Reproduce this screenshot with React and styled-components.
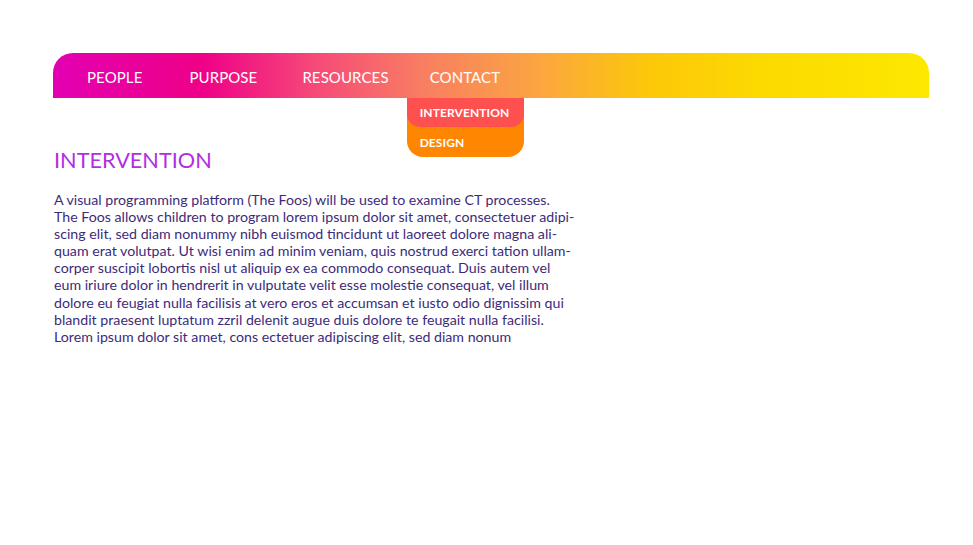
import React from 'react';
import styled, { createGlobalStyle } from 'styled-components';

const GlobalStyle = createGlobalStyle`
  html, body {
    margin: 0;
    padding: 0;
    background: #ffffff;
  }
  body {
    font-family: "Lato", "Open Sans", sans-serif;
  }
`;

const navItems = ['PEOPLE', 'PURPOSE', 'RESOURCES', 'CONTACT'];

const bodyLines = [
  'A visual programming platform (The Foos) will be used to examine CT processes.',
  'The Foos allows children to program lorem ipsum dolor sit amet, consectetuer adipi-',
  'scing elit, sed diam nonummy nibh euismod tincidunt ut laoreet dolore magna ali-',
  'quam erat volutpat. Ut wisi enim ad minim veniam, quis nostrud exerci tation ullam-',
  'corper suscipit lobortis nisl ut aliquip ex ea commodo consequat. Duis autem vel',
  'eum iriure dolor in hendrerit in vulputate velit esse molestie consequat, vel illum',
  'dolore eu feugiat nulla facilisis at vero eros et accumsan et iusto odio dignissim qui',
  'blandit praesent luptatum zzril delenit augue duis dolore te feugait nulla facilisi.',
  'Lorem ipsum dolor sit amet, cons ectetuer adipiscing elit, sed diam nonum',
];

const Page = styled.div`
  padding: 53px 44px 0 53px;
`;

const NavBar = styled.nav`
  display: flex;
  align-items: flex-start;
  height: 45px;
  padding-left: 34px;
  border-radius: 20px 20px 0 0;
  background: linear-gradient(
    90deg,
    #e300b2 0%,
    #ef0088 17%,
    #f64a78 30%,
    #f87d62 42%,
    #fba442 55%,
    #fcc80a 68%,
    #fcdb00 82%,
    #fde800 100%
  );
`;

const NavItem = styled.div`
  position: relative;
  margin-right: ${(p) => p.gap}px;
  padding-top: 2px;
  color: #ffffff;
  font-size: 15px;
  letter-spacing: 0.1px;
  line-height: 45px;
`;

const Dropdown = styled.div`
  position: absolute;
  top: 45px;
  left: -23px;
  width: 117px;
  height: 59px;
  border-radius: 0 0 16px 16px;
  background: #ff8600;
  display: flex;
  flex-direction: column;
`;

const DropItem = styled.div`
  height: ${(p) => (p.$first ? 29 : 30)}px;
  padding-left: 13px;
  padding-top: ${(p) => (p.$first ? 1 : 2)}px;
  box-sizing: border-box;
  display: flex;
  align-items: center;
  color: #ffffff;
  font-size: 12px;
  font-weight: 700;
  line-height: 1;
  letter-spacing: 0.1px;
  background: ${(p) => (p.$first ? '#ff5050' : 'transparent')};
  border-radius: ${(p) => (p.$first ? '0 0 13px 13px' : '0')};
`;

const Content = styled.main`
  padding-left: 1px;
  padding-top: 50px;
`;

const Heading = styled.h1`
  margin: 0;
  color: #b22fe3;
  font-size: 21.7px;
  font-weight: 400;
  line-height: 24px;
`;

const Body = styled.p`
  margin: 19px 0 0;
  color: #3d2b7a;
  font-size: 14.2px;
  line-height: 17.1px;
`;

const Line = styled.span`
  display: block;
  white-space: nowrap;
`;

const gaps = [47, 45, 41, 0];

export default function App() {
  return (
    <>
      <GlobalStyle />
      <Page>
        <NavBar>
          {navItems.map((item, i) => (
            <NavItem key={item} gap={gaps[i]}>
              {item}
              {item === 'CONTACT' && (
                <Dropdown>
                  <DropItem $first>INTERVENTION</DropItem>
                  <DropItem>DESIGN</DropItem>
                </Dropdown>
              )}
            </NavItem>
          ))}
        </NavBar>
        <Content>
          <Heading>INTERVENTION</Heading>
          <Body>
            {bodyLines.map((line) => (
              <Line key={line}>{line}</Line>
            ))}
          </Body>
        </Content>
      </Page>
    </>
  );
}
